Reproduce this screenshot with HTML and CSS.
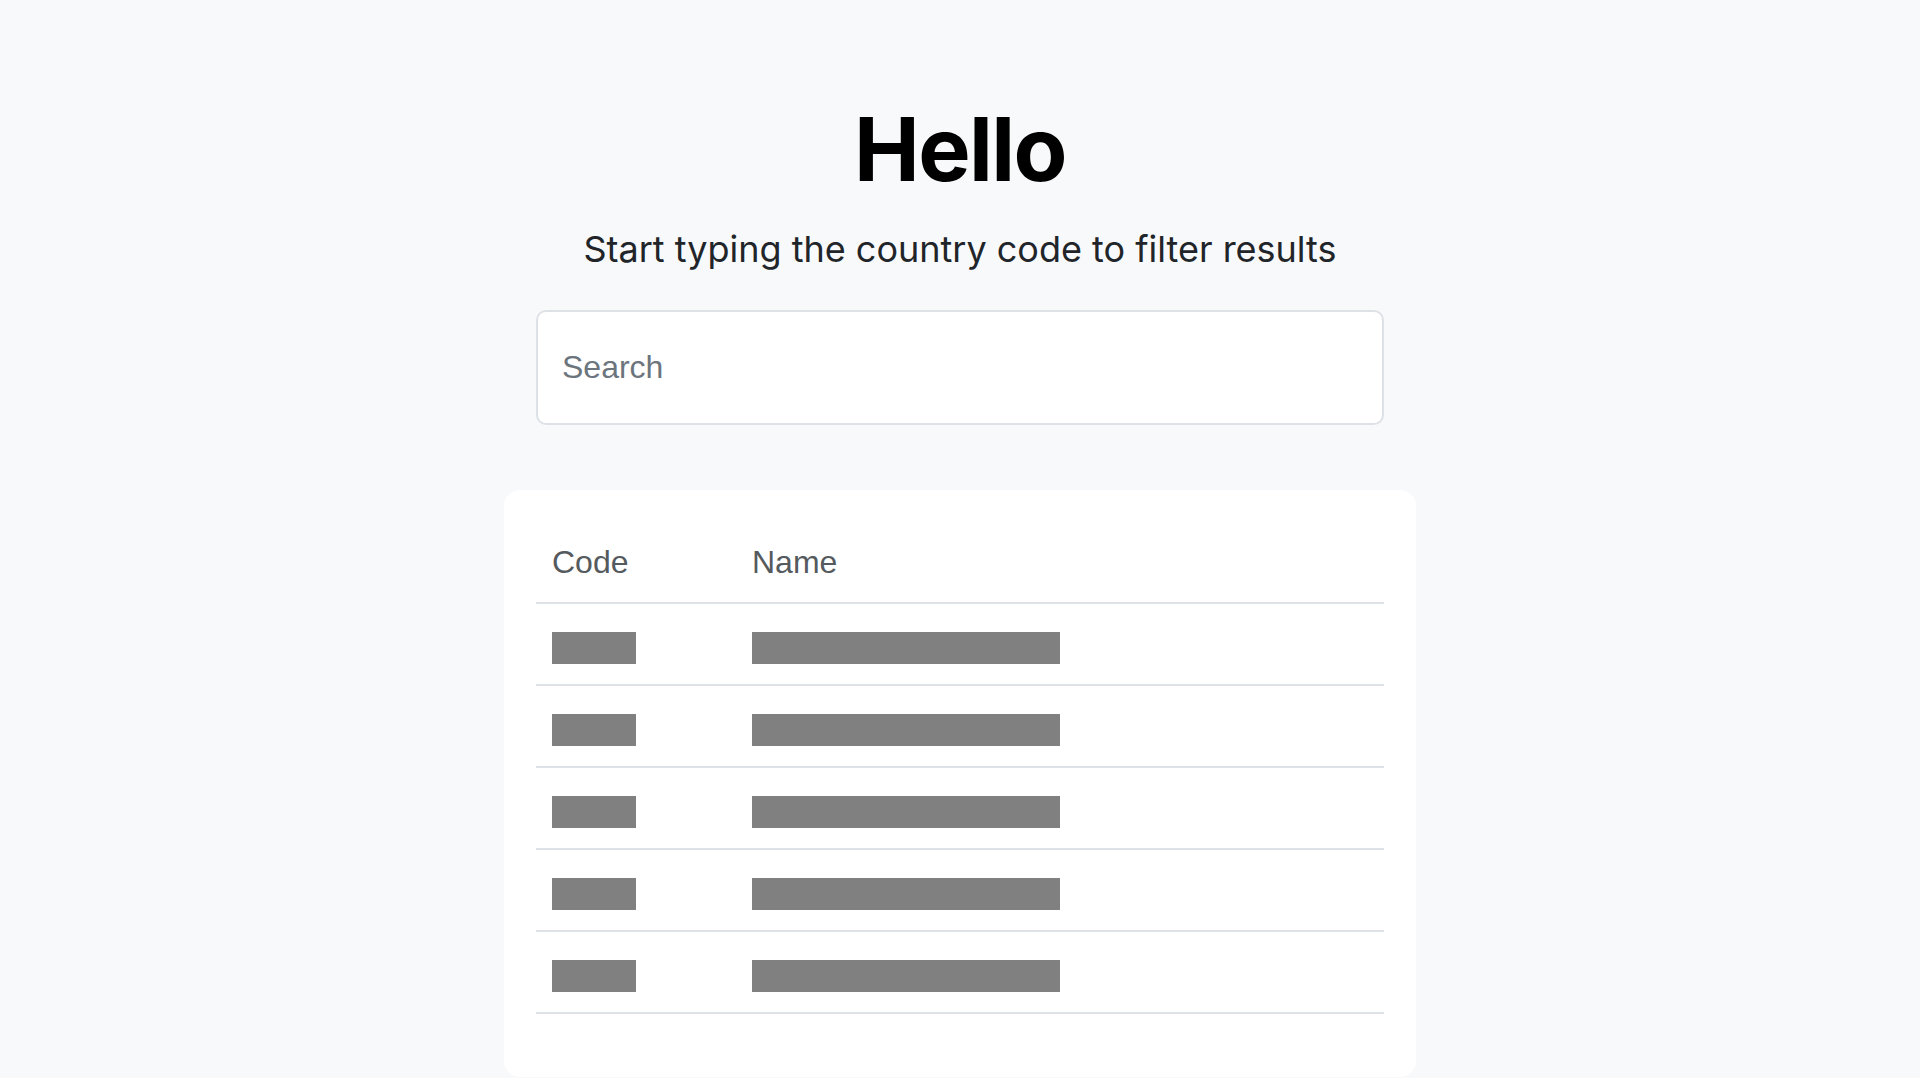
FILE: index.html
```html
<!DOCTYPE html>
<html lang="en">
<head>
<meta charset="utf-8">
<title>Hello</title>
<link rel="stylesheet" href="styles.css">
</head>
<body>
<main class="page">
  <h1 class="title">Hello</h1>
  <p class="lead">Start typing the country code to filter results</p>
  <input class="search" type="text" placeholder="Search">
  <section class="card">
    <table class="table">
      <thead>
        <tr><th class="col-code">Code</th><th>Name</th></tr>
      </thead>
      <tbody>
        <tr><td><span class="ph ph-code"></span></td><td><span class="ph ph-name"></span></td></tr>
        <tr><td><span class="ph ph-code"></span></td><td><span class="ph ph-name"></span></td></tr>
        <tr><td><span class="ph ph-code"></span></td><td><span class="ph ph-name"></span></td></tr>
        <tr><td><span class="ph ph-code"></span></td><td><span class="ph ph-name"></span></td></tr>
        <tr><td><span class="ph ph-code"></span></td><td><span class="ph ph-name"></span></td></tr>
      </tbody>
    </table>
  </section>
</main>
</body>
</html>
```

FILE: styles.css
```css
html, body {
  margin: 0;
  padding: 0;
  background: #f8f9fa;
}

body {
  font-family: "Liberation Sans", Arial, sans-serif;
  color: #212529;
  overflow: hidden;
}

.page {
  display: flex;
  flex-direction: column;
  align-items: center;
  padding-top: 96px;
}

.title {
  margin: 0;
  font-family: Inter, "Noto Sans", sans-serif;
  font-weight: 700;
  font-size: 88px;
  line-height: 106px;
  letter-spacing: -1.6px;
  color: #000;
}

.lead {
  margin: 20px 0 0;
  font-family: Inter, "Noto Sans", sans-serif;
  font-size: 36px;
  line-height: 54px;
  font-weight: 400;
  color: #212529;
}

.search {
  box-sizing: border-box;
  margin-top: 34px;
  width: 848px;
  height: 115px;
  padding: 0 24px;
  border: 2px solid #dee2e6;
  border-radius: 10px;
  background: #fff;
  font-family: "Liberation Sans", Arial, sans-serif;
  font-size: 32px;
  color: #212529;
  outline: none;
}

.search::placeholder {
  color: #6c757d;
}

.card {
  box-sizing: border-box;
  margin-top: 65px;
  width: 912px;
  padding: 32px 32px 63px;
  background: #fff;
  border-radius: 16px;
}

.table {
  width: 100%;
  border-collapse: collapse;
}

.table th {
  text-align: left;
  font-weight: 400;
  font-size: 32px;
  line-height: 48px;
  color: #555a5e;
  padding: 16px;
  border-bottom: 2px solid #dee2e6;
}

.table .col-code {
  width: 168px;
}

.table td {
  padding: 28px 16px 20px;
  border-bottom: 2px solid #dee2e6;
}

.ph {
  display: block;
  height: 32px;
  background: #808080;
}

.ph-code {
  width: 84px;
}

.ph-name {
  width: 308px;
}
```
